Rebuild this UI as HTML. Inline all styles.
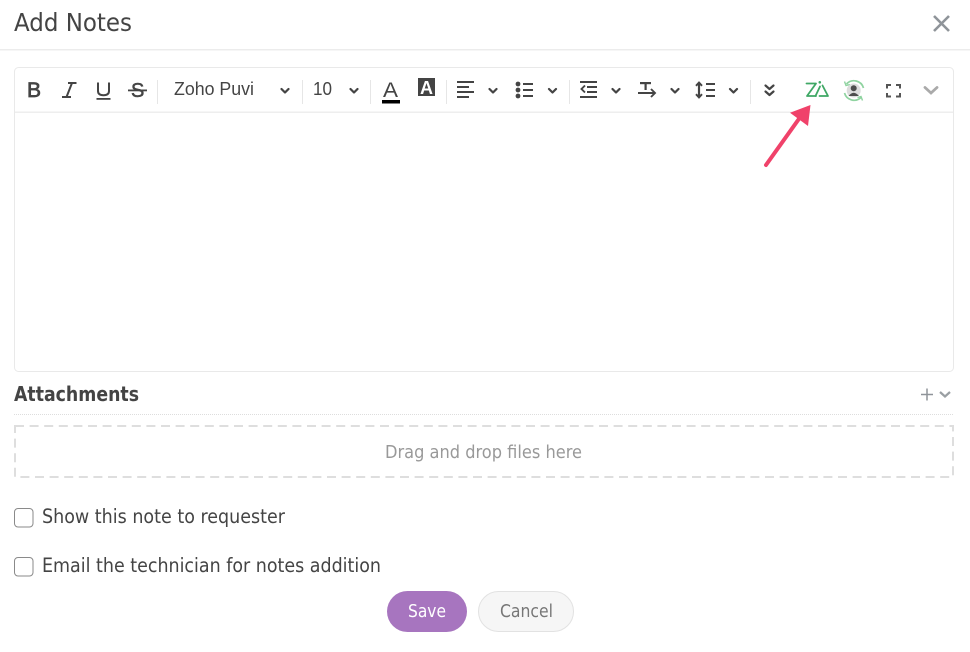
<!DOCTYPE html>
<html><head><meta charset="utf-8"><style>
html,body{margin:0;padding:0;background:#fff;width:970px;height:652px;overflow:hidden}
svg{display:block}
text{font-family:"DejaVu Sans","Liberation Sans",sans-serif}
text.l{font-family:"Liberation Sans",sans-serif}
</style></head><body>
<svg width="970" height="652" viewBox="0 0 970 652" xmlns="http://www.w3.org/2000/svg">
<rect width="970" height="652" fill="#fff"/>
<text x="14" y="31" font-size="25" fill="#444" textLength="118" lengthAdjust="spacingAndGlyphs">Add Notes</text>
<path d="M934 16L949 31M949 16L934 31" stroke="#8f9499" stroke-width="2.600" fill="none"/>
<rect x="0" y="49" width="970" height="1.500" fill="#ececec"/>
<rect x="14.500" y="67.500" width="939" height="304" rx="4" fill="#fff" stroke="#e9e9e9"/>
<rect x="15" y="111.500" width="938" height="1.500" fill="#eeeeee"/>
<g fill="#e6e6e6"><rect x="157" y="80" width="1" height="24"/><rect x="302" y="80" width="1" height="24"/><rect x="370" y="80" width="1" height="24"/><rect x="446" y="80" width="1" height="24"/><rect x="569" y="80" width="1" height="24"/><rect x="750" y="80" width="1" height="24"/></g>
<text class="l" x="27" y="97" font-size="21" fill="#444" stroke="#444" stroke-width=".7">B</text>
<path d="M68 83H76.500M62 97H71M72 83L66.500 97" stroke="#444" stroke-width="2" fill="none"/>
<path d="M98 82.500V91Q98 95.200 103.500 95.200Q109 95.200 109 91V82.500" stroke="#444" stroke-width="2" fill="none"/><rect x="96.500" y="98" width="14" height="1.800" fill="#444"/>
<text class="l" x="131" y="97" font-size="20" fill="#444" stroke="#444" stroke-width=".5">S</text>
<rect x="128" y="89.500" width="19" height="1.800" fill="#444"/>
<text class="l" x="174" y="95" font-size="18" fill="#444" textLength="80" lengthAdjust="spacingAndGlyphs">Zoho Puvi</text>
<text class="l" x="313" y="95" font-size="18" fill="#444" textLength="19" lengthAdjust="spacingAndGlyphs">10</text>
<g fill="none" stroke="#444" stroke-width="2.200" stroke-linecap="round" stroke-linejoin="round">
<path d="M281.500 89L285 92.500L288.500 89M350.500 89L354 92.500L357.500 89M489.500 89L493 92.500L496.500 89M549 89L552.500 92.500L556 89M612.500 89L616 92.500L619.500 89M671.500 89L675 92.500L678.500 89M730 89L733.500 92.500L737 89"/>
<path d="M765.500 85.500L769.500 89L773.500 85.500M765.500 91.500L769.500 95L773.500 91.500"/>
</g>
<text class="l" x="383" y="97" font-size="21" fill="#444" textLength="15" lengthAdjust="spacingAndGlyphs">A</text>
<rect x="382" y="100" width="18" height="3.500" fill="#000"/>
<rect x="418" y="78" width="17" height="18" fill="#444"/>
<text class="l" x="420" y="94" font-size="18" font-weight="bold" fill="#fff" textLength="13" lengthAdjust="spacingAndGlyphs">A</text>
<g fill="#444">
<rect x="457" y="81" width="17" height="2"/><rect x="457" y="86" width="12" height="2"/><rect x="457" y="91" width="17" height="2"/><rect x="457" y="96" width="12" height="2"/>
<circle cx="518" cy="84" r="2.400"/><circle cx="518" cy="90" r="2.400"/><circle cx="518" cy="96" r="2.400"/>
<rect x="523" y="83" width="10" height="2"/><rect x="523" y="89" width="10" height="2"/><rect x="523" y="95" width="10" height="2"/>
<rect x="580" y="81" width="17" height="2"/><rect x="587" y="86" width="10" height="2"/><rect x="587" y="91" width="10" height="2"/><rect x="580" y="96" width="17" height="2"/>
<rect x="640" y="82" width="11" height="2.200"/><rect x="644.500" y="82" width="2.200" height="8"/><rect x="638" y="92" width="16" height="2"/>
<rect x="706" y="83" width="9" height="2"/><rect x="706" y="89" width="9" height="2"/><rect x="706" y="95" width="9" height="2"/>
</g>
<g fill="none" stroke="#444" stroke-width="1.900">
<path d="M585 85.500L581.500 89L585 92.500"/>
<path d="M651 89L655 93L651 97"/>
<path d="M699 83V97" stroke-width="2.200"/>
<path d="M696 85.800L699 82.500L702 85.800M696 94.200L699 97.500L702 94.200"/>
</g>
<g fill="none" stroke="#3fa865" stroke-width="1.800" stroke-linejoin="round" stroke-linecap="round">
<path d="M806.500 83.500H816L807 96H816"/>
<path d="M820 86.500L815.500 96"/>
<path d="M822.500 85.500L828 96H819.500"/>
</g>
<circle cx="819.800" cy="82.300" r="1.300" fill="#3fa865"/>
<path d="M846.500 84A10 10 0 0 1 863.500 88M861 97.500A10 10 0 0 1 844.500 93" fill="none" stroke="#8fd3a0" stroke-width="1.700"/>
<path d="M844.500 81.500L846 85.500L850 84.500M862.500 100.500L861 96.500L857.500 97.500" fill="none" stroke="#8fd3a0" stroke-width="1.400"/>
<circle cx="853.700" cy="90.500" r="7" fill="#dcdcdc"/>
<circle cx="853.700" cy="88.300" r="3" fill="#4d4d4d"/>
<path d="M848.500 96Q853.700 89.500 858.900 96Z" fill="#4d4d4d"/>
<path d="M887 88.500V85H891M896 85H900V88.500M900 93V96.500H896M891 96.500H887V93" fill="none" stroke="#555" stroke-width="2"/>
<path d="M925 87.500L931 93L937 87.500" fill="none" stroke="#aaaaaa" stroke-width="2.800" stroke-linecap="round"/>
<path d="M766 165L801 116" stroke="#f0426a" stroke-width="4" stroke-linecap="round"/>
<path d="M810.500 105L790 112.700L808 126Z" fill="#f0426a"/>
<text x="14" y="401" font-size="20" font-weight="bold" fill="#444" textLength="125" lengthAdjust="spacingAndGlyphs">Attachments</text>
<path d="M921 394.500H933M927 388.500V400.500" stroke="#8f9499" stroke-width="1.500" fill="none"/>
<path d="M940 392L945 396.500L950 392" stroke="#9a9fa3" stroke-width="2.200" fill="none"/>
<line x1="14" y1="414.500" x2="954" y2="414.500" stroke="#ddd" stroke-width="1" stroke-dasharray="1 1"/>
<rect x="15" y="426" width="938" height="51" fill="none" stroke="#dedede" stroke-width="2" stroke-dasharray="9 5.600"/>
<text x="385" y="458" font-size="18" fill="#999" textLength="197" lengthAdjust="spacingAndGlyphs">Drag and drop files here</text>
<rect x="14.500" y="508.500" width="18.500" height="18.500" rx="3.500" fill="#fff" stroke="#8a8a8a"/>
<rect x="14.500" y="557.500" width="18.500" height="18.500" rx="3.500" fill="#fff" stroke="#8a8a8a"/>
<text x="42" y="523" font-size="19.500" fill="#444" textLength="243" lengthAdjust="spacingAndGlyphs">Show this note to requester</text>
<text x="42" y="572" font-size="19.500" fill="#444" textLength="339" lengthAdjust="spacingAndGlyphs">Email the technician for notes addition</text>
<rect x="387" y="591" width="80" height="41" rx="20.500" fill="#a775bf"/>
<rect x="478.500" y="591.500" width="95" height="40" rx="20" fill="#f6f6f6" stroke="#e2e2e2"/>
<text x="408" y="617" font-size="18" fill="#fff" textLength="38" lengthAdjust="spacingAndGlyphs">Save</text>
<text x="500" y="617" font-size="18" fill="#777" textLength="53" lengthAdjust="spacingAndGlyphs">Cancel</text>
</svg>
</body></html>
